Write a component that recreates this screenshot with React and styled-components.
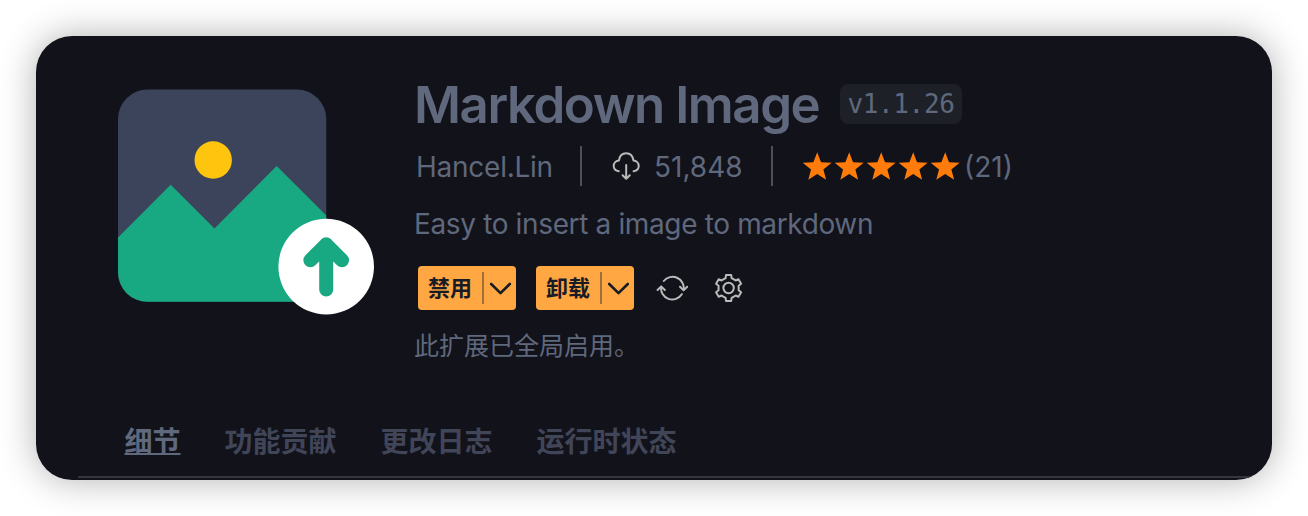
import React from 'react';
import styled, { createGlobalStyle } from 'styled-components';

const GlobalStyle = createGlobalStyle`
  * { box-sizing: border-box; }
  body {
    margin: 0;
    background: #fff;
    font-family: Inter, "Noto Sans CJK SC", sans-serif;
    color: #5f687c;
    overflow: hidden;
  }
`;

const Page = styled.main`
  height: 516px;
  padding: 36px;
`;

const Card = styled.article`
  display: flex;
  flex-direction: column;
  height: 444px;
  padding-left: 42px;
  border-radius: 36px;
  overflow: hidden;
  background: #12121b;
  box-shadow: 0 0 36px rgba(0, 0, 0, 0.31);
`;

const Header = styled.header`
  display: flex;
  gap: 40px;
  height: 366px;
  padding: 38px 0 0 40px;
`;

const Logo = styled.svg`
  flex: none;
  width: 256px;
  height: 256px;
`;

const Icon = styled.svg`
  flex: none;
  width: 32px;
  height: 32px;
  fill: none;
  stroke: currentColor;
  stroke-width: ${({ $weight = 2 }) => $weight};
  stroke-linecap: round;
  stroke-linejoin: round;
`;

const Star = styled.svg`
  flex: none;
  width: 32px;
  height: 32px;
  fill: #ff7b0a;
`;

const Details = styled.section`
  display: flex;
  flex-direction: column;
  align-items: flex-start;
  white-space: nowrap;
`;

const TitleRow = styled.div`
  display: flex;
  align-items: center;
  height: 60px;
`;

const Title = styled.h1`
  margin: 0;
  width: 426px;
  padding-top: 2px;
  font-size: 51px;
  font-weight: 600;
  line-height: 60px;
  letter-spacing: -1.45px;
`;

const Version = styled.code`
  width: 122px;
  height: 40px;
  border-radius: 8px;
  background: #1d2027;
  font: 26px/40px "DejaVu Sans Mono", monospace;
  letter-spacing: -0.4px;
  text-align: center;
`;

const MetaRow = styled.div`
  display: flex;
  align-items: center;
  height: 40px;
  margin-top: 12px;
  font-size: 28px;
`;

const Publisher = styled.span`
  width: 166px;
  padding: 1px 0 0 2px;
  letter-spacing: -0.25px;
`;

const Installs = styled.span`
  display: flex;
  align-items: center;
  gap: 12px;
  width: 191px;
  height: 40px;
  padding-left: 28px;
  border-left: 2px solid #4e4f57;

  svg { color: #b9bab9; }
`;

const Rating = styled.span`
  display: flex;
  align-items: center;
  height: 40px;
  padding-left: 28px;
  border-left: 2px solid #4e4f57;
`;

const Count = styled.span`
  padding: 1px 0 0 ${({ $gap = 0 }) => $gap}px;
`;

const Description = styled.p`
  margin: 20px 0 0;
  font-size: 28px;
  line-height: 37px;
  letter-spacing: -0.36px;
`;

const Actions = styled.div`
  display: flex;
  align-items: center;
  height: 44px;
  margin-top: 23px;
  padding-left: 4px;
`;

const SplitButton = styled.button`
  display: flex;
  align-items: center;
  width: 98px;
  height: 44px;
  margin: 0 20px 0 0;
  padding: 0 0 0 10px;
  border: 0;
  border-radius: 4px;
  background: #ffa742;
  color: #171c26;
  font: 700 22px/40px "Noto Sans CJK SC", sans-serif;
  text-align: left;
`;

const ButtonLabel = styled.span`
  width: 54px;
  height: 44px;
`;

const Caret = styled.span`
  display: flex;
  width: 34px;
  height: 32px;
  border-left: 2px solid #9f6f38;
`;

const IconButton = styled.button`
  display: flex;
  margin: 0 22px 0 2px;
  padding: 0;
  border: 0;
  background: none;
  color: #b9bab9;
`;

const Status = styled.p`
  margin: 18px 0 0;
  font-size: 25px;
  line-height: 37px;
`;

const Tabs = styled.nav`
  display: flex;
  align-items: center;
  gap: 44px;
  height: 76px;
  padding: 5px 0 0 46.5px;
  border-bottom: 2px solid #34353f;
`;

const Tab = styled.a`
  color: ${({ $active }) => ($active ? '#5f687c' : '#414558')};
  font-size: 28px;
  font-weight: 700;
  line-height: 40px;
  text-decoration: ${({ $active }) => ($active ? 'underline' : 'none')};
  text-decoration-thickness: 2px;
  text-decoration-skip-ink: none;
  text-underline-offset: 1px;
`;

const tabs = ['细节', '功能贡献', '更改日志', '运行时状态'];

function polar(cx, cy, r, degrees) {
  const a = (degrees * Math.PI) / 180;
  return `${(cx + r * Math.sin(a)).toFixed(2)} ${(cy - r * Math.cos(a)).toFixed(2)}`;
}

const gearOutline = [0, 60, 120, 180, 240, 300]
  .flatMap((t) => [
    polar(16.6, 16, 10.3, t - 17),
    polar(16.6, 16, 13.2, t - 11.5),
    polar(16.6, 16, 13.2, t + 11.5),
    polar(16.6, 16, 10.3, t + 17),
  ])
  .join(' ');

const starOutline = Array.from({ length: 10 }, (_, i) =>
  polar(16.2, 17.4, i % 2 ? 6.5 : 15.2, i * 36),
).join(' ');

function ExtensionLogo() {
  return (
    <Logo viewBox="0 0 256 256">
      <defs>
        <clipPath id="frame">
          <rect x="0" y="15.5" width="208.3" height="212.3" rx="29.5" />
        </clipPath>
      </defs>
      <g clipPath="url(#frame)">
        <path fill="#3b445b" d="M0 0h256v256H0z" />
        <path fill="#19a982" d="M0 163.5 52.7 110.7 96.5 154.5 158.7 92 208.5 141.8V256H0z" />
      </g>
      <circle cx="95.2" cy="86" r="18.7" fill="#ffc40d" />
      <circle cx="208.2" cy="192.6" r="47.8" fill="#fff" />
      <path
        d="M208.2 215.6V170.3M192.4 186.2l15.8-15.8 15.8 15.8"
        fill="none"
        stroke="#19a982"
        strokeWidth="14"
        strokeLinecap="round"
        strokeLinejoin="round"
      />
    </Logo>
  );
}

function DropdownButton({ children }) {
  return (
    <SplitButton>
      <ButtonLabel>{children}</ButtonLabel>
      <Caret>
        <Icon viewBox="0 0 32 32" $weight={2.6}>
          <path d="m7.2 12 9.3 9.2 9.3-9.2" />
        </Icon>
      </Caret>
    </SplitButton>
  );
}

export default function App() {
  return (
    <Page>
      <GlobalStyle />
      <Card>
        <Header>
          <ExtensionLogo />
          <Details>
            <TitleRow>
              <Title>Markdown Image</Title>
              <Version>v1.1.26</Version>
            </TitleRow>
            <MetaRow>
              <Publisher>Hancel.Lin</Publisher>
              <Installs>
                <Icon viewBox="0 0 32 32">
                  <path d="M8.8 21.2C5.8 20.8 3.7 18.8 3.7 16c0-3 2.3-5.4 5.3-5.6C9.6 6 12.4 3.2 16.2 3.2S22.8 6 23.4 10.4c3 .2 5.3 2.6 5.3 5.6 0 2.800-2.100 4.800-5.100 5.200M16.200 15v13.600M12.600 25.200l3.600 3.600 3.600-3.600" />
                </Icon>
                <Count>51,848</Count>
              </Installs>
              <Rating>
                {[1, 2, 3, 4, 5].map((n) => (
                  <Star key={n} viewBox="0 0 32 32"><polygon points={starOutline} /></Star>
                ))}
                <Count $gap={3}>(21)</Count>
              </Rating>
            </MetaRow>
            <Description>Easy to insert a image to markdown</Description>
            <Actions>
              <DropdownButton>禁用</DropdownButton>
              <DropdownButton>卸载</DropdownButton>
              <IconButton aria-label="sync">
                <Icon viewBox="0 0 32 32">
                  <path d="M7.800 9A11.200 11.200 0 0 1 27.600 17.800M24 14.800l3.600 3.600 3.600-3.600M25.800 22.200A11.200 11.200 0 0 1 5.200 14.600M1.600 18l3.600-3.600L8.800 18" />
                </Icon>
              </IconButton>
              <IconButton aria-label="manage">
                <Icon viewBox="0 0 32 32">
                  <polygon points={gearOutline} />
                  <circle cx="16.6" cy="16" r="5.2" />
                </Icon>
              </IconButton>
            </Actions>
            <Status>此扩展已全局启用。</Status>
          </Details>
        </Header>
        <Tabs>
          {tabs.map((name, i) => <Tab key={name} $active={i === 0}>{name}</Tab>)}
        </Tabs>
      </Card>
    </Page>
  );
}
